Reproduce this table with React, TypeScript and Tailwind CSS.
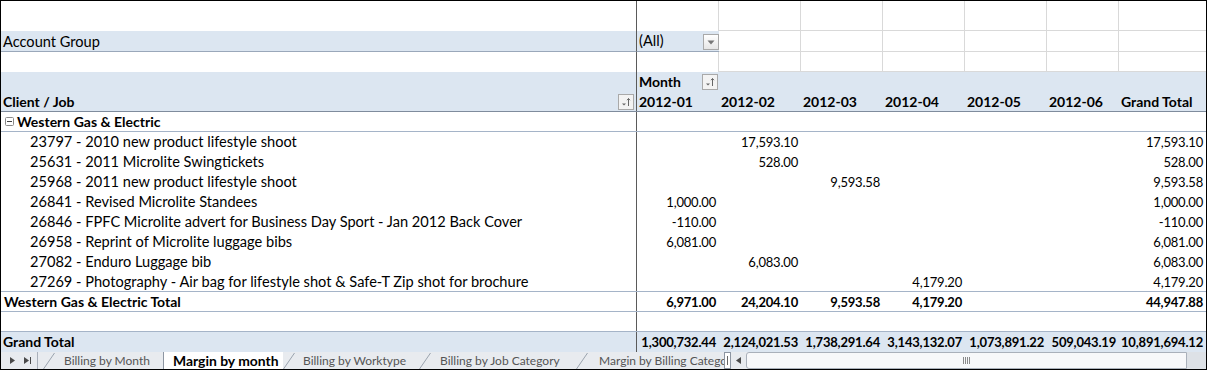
import React from "react";

const font = "font-['Lato',sans-serif]";
const band = "bg-[#dce6f1]";
const grid = "border-[#d9d9d9]";

// widths include each cell's right border px
const W = ["w-[636px]", "w-[82px]", "w-[82px]", "w-[82px]", "w-[82px]", "w-[82px]", "w-[72px]", "w-[87px]"];

type Vals = (string | null)[];

const jobs: [string, Vals][] = [
  ["23797 - 2010 new product lifestyle shoot", [null, "17,593.10", null, null, null, null, "17,593.10"]],
  ["25631 - 2011 Microlite Swingtickets", [null, "528.00", null, null, null, null, "528.00"]],
  ["25968 - 2011 new product lifestyle shoot", [null, null, "9,593.58", null, null, null, "9,593.58"]],
  ["26841 - Revised Microlite Standees", ["1,000.00", null, null, null, null, null, "1,000.00"]],
  ["26846 - FPFC Microlite advert for Business Day Sport - Jan 2012 Back Cover", ["-110.00", null, null, null, null, null, "-110.00"]],
  ["26958 - Reprint of Microlite luggage bibs", ["6,081.00", null, null, null, null, null, "6,081.00"]],
  ["27082 - Enduro Luggage bib", [null, "6,083.00", null, null, null, null, "6,083.00"]],
  ["27269 - Photography - Air bag for lifestyle shot & Safe-T Zip shot for brochure", [null, null, null, "4,179.20", null, null, "4,179.20"]],
];

const subtotal: Vals = ["6,971.00", "24,204.10", "9,593.58", "4,179.20", null, null, "44,947.88"];
const grand: Vals = ["1,300,732.44", "2,124,021.53", "1,738,291.64", "3,143,132.07", "1,073,891.22", "509,043.19", "10,891,694.12"];
const months = ["2012-01", "2012-02", "2012-03", "2012-04", "2012-05", "2012-06", "Grand Total"];

function SortBtn() {
  return (
    <span className="flex h-[16px] w-[16px] shrink-0 items-center justify-center border border-[#a9a9a9] bg-[#f3f3f3]">
      <svg width="12" height="12" viewBox="0 0 12 12">
        <path d="M2 7.5h4l-2 2z" fill="#666" />
        <path d="M8.5 10V2.5M7 4.2l1.5-1.7L10 4.2" stroke="#666" strokeWidth="1" fill="none" />
      </svg>
    </span>
  );
}

function DropBtn() {
  return (
    <span className="flex h-[16px] w-[16px] shrink-0 items-center justify-center border border-[#a9a9a9] bg-gradient-to-b from-white to-[#e6e6e6]">
      <svg width="8" height="5" viewBox="0 0 8 5">
        <path d="M0.5 0.5h7L4 4.5z" fill="#777" />
      </svg>
    </span>
  );
}

function NumRow({ vals, bold }: { vals: Vals; bold?: boolean }) {
  return (
    <>
      {vals.map((v, i) => (
        <div
          key={i}
          className={`${W[i + 1]} shrink-0 overflow-hidden whitespace-nowrap pr-[3px] text-right text-[13px] tracking-[-0.2px] ${bold ? "font-bold" : ""}`}
        >
          {v ?? ""}
        </div>
      ))}
    </>
  );
}

function Slant() {
  return (
    <svg width="12" height="17" viewBox="0 0 12 17" className="shrink-0">
      <path d="M0.5 17L11.5 1" stroke="#9aa3ae" strokeWidth="1" fill="none" />
    </svg>
  );
}

export default function App() {
  return (
    <div className={`${font} h-[370px] w-[1207px] overflow-hidden border border-black bg-white text-[14.6px] leading-[20px] text-black`}>
      {/* row 1 */}
      <div className="flex h-[30px]">
        <div className={`${W[0]} shrink-0 border-r border-[#5a5a5a]`} />
        <div className={`${W[1]} shrink-0 border-r ${grid}`} />
        {[2, 3, 4, 5, 6].map((i) => (
          <div key={i} className={`${W[i]} shrink-0 border-r border-b ${grid}`} />
        ))}
        <div className={`${W[7]} shrink-0 border-b ${grid}`} />
      </div>

      {/* Account Group filter */}
      <div className="flex h-[21px]">
        <div className={`${W[0]} shrink-0 border-r border-b border-r-[#5a5a5a] border-b-[#9aa8ba] ${band} pl-[2px] leading-[21px]`}>
          Account Group
        </div>
        <div className={`${W[1]} flex shrink-0 items-end justify-between border-b border-b-[#9aa8ba] ${band} pb-[1px] pl-[2px]`}>
          <span className="leading-[19px]">(All)</span>
          <DropBtn />
        </div>
        {[2, 3, 4, 5, 6].map((i) => (
          <div key={i} className={`${W[i]} shrink-0 border-r border-b ${grid}`} />
        ))}
        <div className={`${W[7]} shrink-0 border-b ${grid}`} />
      </div>

      {/* row 3 */}
      <div className="flex h-[20px]">
        <div className={`${W[0]} shrink-0 border-r border-[#5a5a5a]`} />
        <div className={`${W[1]} shrink-0 border-r ${grid}`} />
        {[2, 3, 4, 5, 6].map((i) => (
          <div key={i} className={`${W[i]} shrink-0 border-r border-b ${grid}`} />
        ))}
        <div className={`${W[7]} shrink-0 border-b ${grid}`} />
      </div>

      {/* Month header */}
      <div className={`flex h-[20px] ${band} text-[14px]`}>
        <div className={`${W[0]} shrink-0 border-r border-[#5a5a5a]`} />
        <div className={`${W[1]} flex shrink-0 items-center justify-between pl-[2px] pr-[1px] font-bold`}>
          <span>Month</span>
          <SortBtn />
        </div>
      </div>

      {/* Client / Job header */}
      <div className={`flex h-[20px] border-b border-[#7f8c9d] ${band} text-[14px] font-bold`}>
        <div className={`${W[0]} flex shrink-0 items-center justify-between border-r border-[#5a5a5a] pl-[2px] pr-[2px]`}>
          <span>Client / Job</span>
          <SortBtn />
        </div>
        {months.map((m, i) => (
          <div key={m} className={`${W[i + 1]} shrink-0 whitespace-nowrap pl-[2px]`}>
            {m}
          </div>
        ))}
      </div>

      {/* group header */}
      <div className="flex h-[20px] border-b border-[#a5b4c8] text-[14px] font-bold">
        <div className={`${W[0]} flex shrink-0 items-center border-r border-[#5a5a5a] pl-[4px]`}>
          <svg width="9" height="9" viewBox="0 0 9 9" className="mr-[3px] shrink-0">
            <rect x="0.5" y="0.5" width="8" height="8" rx="1" fill="#fff" stroke="#8a8a8a" />
            <path d="M2 4.5h5" stroke="#444" />
          </svg>
          <span>Western Gas &amp; Electric</span>
        </div>
      </div>

      {/* jobs */}
      {jobs.map(([name, vals], r) => (
        <div key={name} className={`flex h-[20px] ${r === jobs.length - 1 ? "border-b border-[#a5b4c8]" : ""}`}>
          <div className={`${W[0]} shrink-0 overflow-hidden whitespace-nowrap border-r border-[#5a5a5a] pl-[29px]`}>{name}</div>
          <NumRow vals={vals} />
        </div>
      ))}

      {/* subtotal */}
      <div className="flex h-[20px] border-b border-[#a5b4c8] text-[14px] font-bold">
        <div className={`${W[0]} shrink-0 whitespace-nowrap border-r border-[#5a5a5a] pl-[3px]`}>Western Gas &amp; Electric Total</div>
        <NumRow vals={subtotal} bold />
      </div>

      {/* blank */}
      <div className="flex h-[20px] border-b border-[#a5b4c8]">
        <div className={`${W[0]} shrink-0 border-r border-[#5a5a5a]`} />
      </div>

      {/* grand total */}
      <div className={`flex h-[20px] ${band} text-[14px] font-bold`}>
        <div className={`${W[0]} shrink-0 border-r border-[#5a5a5a] pl-[2px]`}>Grand Total</div>
        <NumRow vals={grand} bold />
      </div>

      {/* sheet tabs */}
      <div className="flex h-[17px] items-stretch bg-[#e8ebef] text-[12px] leading-[17px] text-[#555]">
        <div className="flex w-[37px] shrink-0 items-center gap-[9px] border-r border-[#a9b0ba] pl-[9px]">
          <svg width="5" height="7" viewBox="0 0 5 7"><path d="M0 0l5 3.5L0 7z" fill="#4a4a4a" /></svg>
          <svg width="8" height="7" viewBox="0 0 8 7"><path d="M0 0l5 3.5L0 7z" fill="#4a4a4a" /><path d="M6.5 0v7" stroke="#4a4a4a" /></svg>
        </div>
        <div className="w-[5px] shrink-0" />
        <Slant />
        <div className="w-[108px] shrink-0 overflow-hidden whitespace-nowrap pl-[9px]">Billing by Month</div>
        <div className="w-[120px] shrink-0 whitespace-nowrap border-l border-[#8d96a2] bg-white pl-[9px] text-[13.9px] font-bold text-black">Margin by month</div>
        <Slant />
        <div className="w-[124px] shrink-0 overflow-hidden whitespace-nowrap pl-[8px]">Billing by Worktype</div>
        <Slant />
        <div className="w-[145px] shrink-0 overflow-hidden whitespace-nowrap pl-[9px]">Billing by Job Category</div>
        <Slant />
        <div className="w-[136px] shrink-0 overflow-hidden whitespace-nowrap pl-[11px]">Margin by Billing Category</div>
        <div className="flex w-[7px] shrink-0 items-center justify-center border border-[#8d96a2] bg-white">
          <span className="h-[9px] w-px bg-[#666]" />
        </div>
        <div className="flex w-[15px] shrink-0 items-center justify-center">
          <svg width="5" height="7" viewBox="0 0 5 7"><path d="M5 0L0 3.5 5 7z" fill="#4a4a4a" /></svg>
        </div>
        <div className="flex w-[441px] shrink-0 items-center justify-center rounded-l-[3px] border border-[#a9b0ba] bg-[#f7f8fa]">
          <div className="flex gap-[1px]">
            <span className="h-[7px] w-px bg-[#8a8a8a]" />
            <span className="h-[7px] w-px bg-[#8a8a8a]" />
            <span className="h-[7px] w-px bg-[#8a8a8a]" />
            <span className="h-[7px] w-px bg-[#8a8a8a]" />
          </div>
        </div>
        <div className="flex-1 bg-[#dde1e6]" />
      </div>
    </div>
  );
}
